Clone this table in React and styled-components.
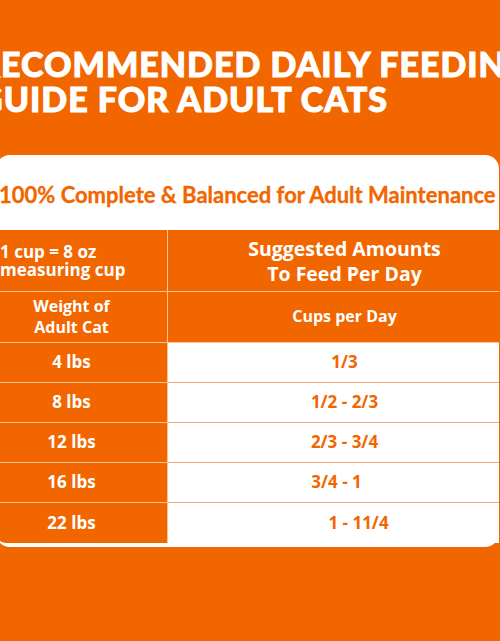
import styled, { createGlobalStyle } from 'styled-components';

const GlobalStyle = createGlobalStyle`
	html, body {
		margin: 0;
		padding: 0;
		background: #f26600;
	}
`;

const ORANGE = '#f26600';

const Page = styled.div`
	width: 500px;
	height: 641px;
	overflow: hidden;
	background: ${ORANGE};
	font-family: 'Open Sans', 'Liberation Sans', sans-serif;
`;

const Title = styled.h1`
	margin: 0 0 0 -22px;
	padding-top: 46px;
	white-space: nowrap;
	color: #fff;
	font-family: Lato, 'DejaVu Sans', sans-serif;
	font-weight: 900;
	font-size: 34px;
	line-height: 35px;
	letter-spacing: 1px;
	-webkit-text-stroke: 1px #fff;
`;

const Card = styled.div`
	margin: 39px 0 0 -4px;
	width: 503px;
	background: #fff;
	border-radius: 14px;
	padding-bottom: 4px;
`;

const Subtitle = styled.div`
	height: 75px;
	display: flex;
	align-items: center;
	padding-left: 3px;
	padding-top: 4px;
	box-sizing: border-box;
	color: ${ORANGE};
	font-family: Lato, 'Open Sans', sans-serif;
	font-weight: 700;
	font-size: 22px;
	white-space: nowrap;
	-webkit-text-stroke: 0.3px ${ORANGE};
`;

const Table = styled.div`
	display: grid;
	grid-template-columns: 172px 1fr;
	grid-template-rows: 62px 51px repeat(5, 40px);
`;

const Cell = styled.div`
	display: flex;
	flex-direction: column;
	justify-content: center;
	align-items: ${(p) => (p.$left ? 'flex-start' : 'center')};
	box-sizing: border-box;
	background: ${(p) => (p.$filled ? ORANGE : '#fff')};
	color: ${(p) => (p.$filled ? '#fff' : ORANGE)};
	border-bottom: ${(p) => (p.$last ? 'none' : `1px solid ${p.$filled ? '#f9c39a' : '#f4a571'}`)};
	border-right: ${(p) => (p.$side ? '1px solid #f9c39a' : 'none')};
	border-bottom-left-radius: ${(p) => (p.$corner ? '10px' : '0')};
	padding: ${(p) => (p.$side ? '0 24px 0 4px' : '0 0 0 22px')};
	padding-left: ${(p) => (p.$left ? '4px' : undefined)};
	text-align: center;
	font-weight: 700;
	font-size: ${(p) => p.$size || '17px'};
	line-height: ${(p) => p.$lh || '1.2'};
	white-space: nowrap;
`;

const Value = styled.span`
	transform: translateX(${(p) => p.$shift || 0}px);
`;

const rows = [
	{ weight: '4 lbs', cups: '1/3' },
	{ weight: '8 lbs', cups: '1/2 - 2/3' },
	{ weight: '12 lbs', cups: '2/3 - 3/4' },
	{ weight: '16 lbs', cups: '3/4 - 1', shift: -8 },
	{ weight: '22 lbs', cups: '1 - 11/4', shift: 14 },
];

export default function App() {
	return (
		<Page>
			<GlobalStyle />
			<Title>
				RECOMMENDED DAILY FEEDING
				<br />
				GUIDE FOR ADULT CATS
			</Title>
			<Card>
				<Subtitle>100% Complete &amp; Balanced for Adult Maintenance</Subtitle>
				<Table>
					<Cell $filled $side $left $size="17px" $lh="18px">
						<span>1 cup = 8 oz</span>
						<span>measuring cup</span>
					</Cell>
					<Cell $filled $size="19.5px" $lh="25px">
						<span>Suggested Amounts</span>
						<span>To Feed Per Day</span>
					</Cell>
					<Cell $filled $side $size="16px" $lh="21px">
						<span>Weight of</span>
						<span>Adult Cat</span>
					</Cell>
					<Cell $filled $size="16px">
						Cups per Day
					</Cell>
					{rows.map((r, i) => {
						const last = i === rows.length - 1;
						return [
							<Cell key={`w${i}`} $filled $side $last={last} $corner={last}>
								{r.weight}
							</Cell>,
							<Cell key={`c${i}`} $last={last}>
								<Value $shift={r.shift}>{r.cups}</Value>
							</Cell>,
						];
					})}
				</Table>
			</Card>
		</Page>
	);
}
